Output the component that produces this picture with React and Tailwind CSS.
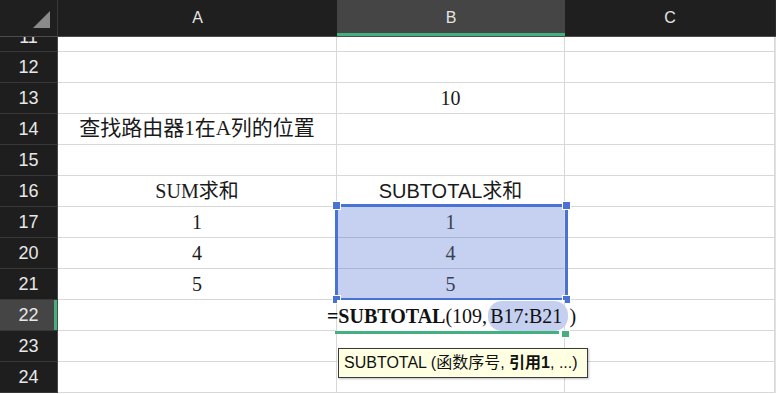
import React from "react";

const serif = "font-['Liberation_Serif','Noto_Sans_CJK_SC',serif]";
const sans = "font-['Liberation_Sans','Noto_Sans_CJK_SC',sans-serif]";

const rows = [
  { n: "12" },
  { n: "13", b: "10" },
  { n: "14", a: "查找路由器1在A列的位置", big: true },
  { n: "15" },
  { n: "16", a: "SUM求和", b: "SUBTOTAL求和", bSans: true },
  { n: "17", a: "1", b: "1", sel: true },
  { n: "20", a: "4", b: "4", sel: true },
  { n: "21", a: "5", b: "5", sel: true },
  { n: "22", editing: true },
  { n: "23" },
  { n: "24" },
];

const RowHead = ({ n, active }) => (
  <div
    className={`w-[58px] h-full shrink-0 flex items-center justify-center border-r border-b border-r-[#4a4a4a] border-b-[#383838] text-[18px] text-[#e8e8e8] ${sans} relative ${
      active ? "bg-[#454545]" : "bg-[#1e1e1e]"
    }`}
  >
    {n}
    {active && <div className="absolute right-0 top-0 bottom-0 w-[3px] bg-[#44b07f]" />}
  </div>
);

const Formula = () => (
  <div className="relative z-10 w-[228px] h-full shrink-0 flex items-center justify-center border-r border-[#d8d8d8] bg-white">
    <div className={`whitespace-nowrap flex items-center text-[20px] text-[#111] ${serif} pl-[2px]`}>
      <span className="font-bold">=SUBTOTAL</span>
      <span>(109,</span>
      <span className="bg-[#c5d0f0] rounded-[14px] h-[30px] flex items-center pl-[2px] pr-[6px] ml-[1px]">B17:B21</span>
      <span className="ml-[1px]">)</span>
    </div>
    <div className="absolute left-[-2px] top-[31px] w-[224px] h-[3px] bg-[#44b07f]" />
    <div className="absolute left-[224px] top-[30px] w-[9px] h-[8px] bg-[#44b07f] border border-white" />
  </div>
);

const Row = ({ r }) => (
  <div className="flex h-[31px]">
    <RowHead n={r.n} active={r.editing} />
    <div
      className={`w-[279px] h-full shrink-0 flex items-center justify-center border-r border-b border-[#d8d8d8] bg-white ${
        r.big ? "text-[21px]" : "text-[20px]"
      } text-[#1a1a1a] ${serif}`}
    >
      {r.a}
    </div>
    {r.editing ? (
      <Formula />
    ) : (
      <div
        className={`w-[228px] h-full shrink-0 flex items-center justify-center border-r border-b text-[20px] ${
          r.sel ? "bg-[#c6d1f1] border-b-[#a9b4d5] border-r-[#d8d8d8] text-[#3a3e52]" : "bg-white border-[#d8d8d8] text-[#1a1a1a]"
        } ${r.bSans ? sans : serif}`}
      >
        {r.b}
      </div>
    )}
    <div className="w-[210px] h-full shrink-0 border-r border-b border-[#d8d8d8] bg-white" />
    <div className="flex-1 h-full bg-[#e2e2e2]" />
  </div>
);

const App = () => {
  return (
    <div className="w-[776px] h-[394px] overflow-hidden relative bg-white">
      {/* column header */}
      <div className={`flex h-[37px] bg-[#1f1f1f] border-b border-[#4c4c4c] text-[16px] text-[#e4e4e4] ${sans}`}>
        <div className="w-[58px] shrink-0 border-r border-[#383838] relative">
          <svg className="absolute left-0 top-0" width="58" height="36">
            <polygon points="50,11 50,28 33,28" fill="#8a8a8a" />
          </svg>
        </div>
        <div className="w-[279px] shrink-0 flex items-center justify-center">A</div>
        <div className="w-[228px] shrink-0 flex items-center justify-center bg-[#454545] border-b-[3px] border-[#44b07f] pt-[3px]">
          B
        </div>
        <div className="w-[210px] shrink-0 flex items-center justify-center">C</div>
        <div className="flex-1 bg-[#2a2a2a]" />
      </div>

      {/* row 11, scrolled mostly out of view */}
      <div className="h-[15px] overflow-hidden flex flex-col justify-end">
        <Row r={{ n: "11" }} />
      </div>

      {rows.map((r) => (
        <Row key={r.n} r={r} />
      ))}

      {/* selection B17:B21 */}
      <div className="absolute left-[335px] top-[204px] w-[233px] h-[97px] border-[3px] border-[#4a72d4] pointer-events-none" />
      <div className="absolute left-[332px] top-[201px] w-[9px] h-[9px] bg-[#4a72d4] border border-white" />
      <div className="absolute left-[562px] top-[201px] w-[9px] h-[9px] bg-[#4a72d4] border border-white" />
      <div className="absolute left-[332px] top-[295px] w-[9px] h-[9px] bg-[#4a72d4] border border-white" />
      <div className="absolute left-[562px] top-[295px] w-[9px] h-[9px] bg-[#4a72d4] border border-white" />

      {/* function hint */}
      <div
        className={`absolute left-[338px] top-[348px] w-[250px] h-[30px] bg-[#ffffe1] border border-[#3a3a3a] shadow-[1px_1px_2px_rgba(0,0,0,0.25)] flex items-center pl-[5px] text-[16px] text-[#111] whitespace-nowrap ${sans}`}
      >
        SUBTOTAL (函数序号, <span className="font-bold">&nbsp;引用1</span>, ...)
      </div>
    </div>
  );
};

export default App;
